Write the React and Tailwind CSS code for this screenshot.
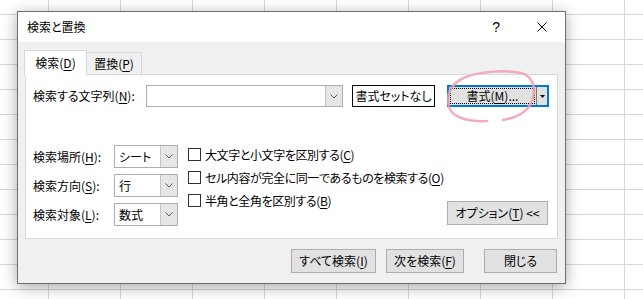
import React from "react";

const U = ({ children }) => (
  <span className="underline underline-offset-[2px] decoration-[1px]">{children}</span>
);

function Chevron() {
  return (
    <svg width="8" height="5" viewBox="0 0 8 5">
      <polyline points="0.5,0.5 4,4 7.5,0.5" fill="none" stroke="#5a5a5a" strokeWidth="1" />
    </svg>
  );
}

function Select({ value }) {
  return (
    <div className="flex w-[64px] h-[23px] border border-[#adadad] bg-white">
      <div className="flex-1 flex items-center pl-[4px] leading-[14px]">{value}</div>
      <div className="w-[17px] border-l border-[#c4c4c4] bg-[#e6e6e6] flex items-center justify-center">
        <Chevron />
      </div>
    </div>
  );
}

function Check({ children }) {
  return (
    <div className="flex items-center h-[23px] whitespace-nowrap">
      <div className="w-[13px] h-[13px] shrink-0 border border-[#333333] bg-white" />
      <div className="ml-[4px] leading-[14px] whitespace-nowrap tracking-[-0.4px]">{children}</div>
    </div>
  );
}

function Btn({ w, children }) {
  return (
    <div className={`${w} h-[24px] border border-[#adadad] bg-[#e1e1e1] flex items-center justify-center leading-[14px] whitespace-nowrap`}>
      {children}
    </div>
  );
}

export default function App() {
  return (
    <div className="relative w-[643px] h-[299px] overflow-hidden bg-white bg-[linear-gradient(to_right,#d6d6d6_1px,transparent_1px),linear-gradient(to_bottom,#d6d6d6_1px,transparent_1px)] [background-size:72px_25px] [background-position:48px_14px] text-[12px] text-black font-['Noto_Sans_CJK_JP',sans-serif] [font-feature-settings:'palt']">
      {/* dialog window */}
      <div className="absolute left-[17px] top-[11px] w-[549px] h-[273px] border border-[#6e6e6e] bg-[#f0f0f0] flex flex-col shadow-[0_3px_14px_rgba(0,0,0,0.35)]">
        {/* title bar */}
        <div className="h-[30px] bg-white flex items-center pl-[9px] shrink-0">
          <span className="leading-[14px]">検索と置換</span>
          <span className="ml-auto font-['Liberation_Sans',sans-serif] text-[14px] leading-[14px]">?</span>
          <svg className="ml-[37px] mr-[18px]" width="10" height="10" viewBox="0 0 10 10">
            <path d="M0.5 0.5 L9.5 9.5 M9.5 0.5 L0.5 9.5" stroke="#000" strokeWidth="1" />
          </svg>
        </div>

        {/* body */}
        <div className="flex-1 flex flex-col pt-[8px] pl-[6px] pr-[7px]">
          {/* tabs */}
          <div className="flex items-end h-[24px]">
            <div className="relative z-10 w-[63px] h-[25px] -mb-px bg-white border-t border-l border-r border-[#d9d9d9] flex items-start justify-center pt-[5px] leading-[14px]">
              <span>検索(<U>D</U>)</span>
            </div>
            <div className="w-[55px] h-[22px] bg-[#f0f0f0] border-t border-r border-[#d9d9d9] flex items-center justify-center leading-[14px]">
              <span>置換(<U>P</U>)</span>
            </div>
          </div>

          {/* panel */}
          <div className="ml-[1px] w-[533px] h-[165px] bg-white border border-[#d9d9d9] flex flex-col">
            {/* row 1 */}
            <div className="flex items-center mt-[10px] pl-[7px]">
              <div className="w-[113px] leading-[14px] whitespace-nowrap">検索する文字列(<U>N</U>):</div>
              <div className="flex w-[197px] h-[22px] border border-[#adadad] bg-white">
                <div className="flex-1" />
                <div className="w-[17px] border-l border-[#c4c4c4] bg-[#e6e6e6] flex items-center justify-center">
                  <Chevron />
                </div>
              </div>
              <div className="ml-[9px] w-[83px] h-[22px] border border-black bg-white flex items-center justify-center leading-[14px] whitespace-nowrap">
                書式セットなし
              </div>
              <div className="ml-[12px] w-[102px] h-[22px] border-2 border-[#0078d7] bg-[#e1e1e1] flex items-stretch">
                <div className="flex-1 m-[1px] border border-dotted border-black flex items-center justify-center leading-[14px] whitespace-nowrap">
                  書式(<U>M</U>)...
                </div>
                <div className="w-[11px] border-l border-[#7a7a7a] flex items-center justify-center">
                  <svg width="5" height="3" viewBox="0 0 5 3">
                    <path d="M0 0 L5 0 L2.5 3 Z" fill="#000" />
                  </svg>
                </div>
              </div>
            </div>

            {/* lower section */}
            <div className="flex mt-[38px] pl-[7px]">
              <div className="flex flex-col gap-[6px] shrink-0">
                <div className="flex items-center">
                  <div className="w-[81px] leading-[14px] whitespace-nowrap">検索場所(<U>H</U>):</div>
                  <Select value="シート" />
                </div>
                <div className="flex items-center">
                  <div className="w-[81px] leading-[14px] whitespace-nowrap">検索方向(<U>S</U>):</div>
                  <Select value="行" />
                </div>
                <div className="flex items-center">
                  <div className="w-[81px] leading-[14px] whitespace-nowrap">検索対象(<U>L</U>):</div>
                  <Select value="数式" />
                </div>
              </div>
              <div className="flex flex-col ml-[10px] -mt-[2px] w-[250px] shrink-0">
                <Check>大文字と小文字を区別する(<U>C</U>)</Check>
                <Check>セル内容が完全に同一であるものを検索する(<U>O</U>)</Check>
                <Check>半角と全角を区別する(<U>B</U>)</Check>
              </div>
              <div className="ml-auto mr-[9px] mt-[56px] shrink-0">
                <Btn w="w-[101px]">
                  オプション(<U>T</U>) &lt;&lt;
                </Btn>
              </div>
            </div>
          </div>

          {/* bottom buttons */}
          <div className="flex justify-end mt-[10px] pr-[1px]">
            <Btn w="w-[85px]">すべて検索(<U>I</U>)</Btn>
            <div className="ml-[10px]">
              <Btn w="w-[78px]">次を検索(<U>F</U>)</Btn>
            </div>
            <div className="ml-[20px]">
              <Btn w="w-[73px]">閉じる</Btn>
            </div>
          </div>
        </div>
      </div>

      {/* pink hand-drawn annotation */}
      <svg className="absolute left-0 top-0 pointer-events-none" width="643" height="299" viewBox="0 0 643 299">
        <path
          d="M487 121 C470 122 452 118 449 107 C446 94 451 83 466 77 C482 71 505 70 521 73 C532 76 536 86 533 98 C530 110 520 117 503 120"
          fill="none"
          stroke="#f09fae"
          strokeWidth="2.5"
          strokeLinecap="round"
          opacity="0.85"
        />
      </svg>
    </div>
  );
}
